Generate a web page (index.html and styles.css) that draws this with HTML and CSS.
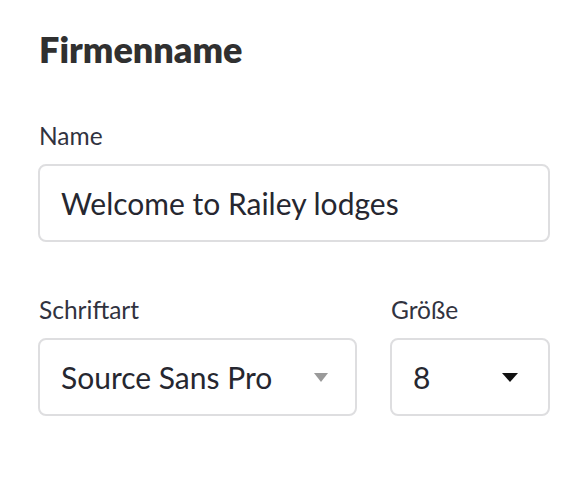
FILE: index.html
```html
<!DOCTYPE html>
<html lang="de">
<head>
<meta charset="utf-8">
<title>Firmenname</title>
<link rel="stylesheet" href="styles.css">
</head>
<body>
<div class="panel">
  <h2 class="title">Firmenname</h2>
  <div class="field">
    <label class="label">Name</label>
    <div class="box">
      <span class="value">Welcome to Railey lodges</span>
    </div>
  </div>
  <div class="row">
    <div class="field">
      <label class="label">Schriftart</label>
      <div class="box select">
        <span class="value">Source Sans Pro</span>
        <svg class="arrow gray" width="14" height="10" viewBox="0 0 14 10"><polygon points="0,0 14,0 7,9" fill="#9a9a9a"/></svg>
      </div>
    </div>
    <div class="field">
      <label class="label">Größe</label>
      <div class="box select">
        <span class="value">8</span>
        <svg class="arrow dark" width="16" height="10" viewBox="0 0 16 10"><polygon points="0,0 16,0 8,9" fill="#111"/></svg>
      </div>
    </div>
  </div>
</div>
</body>
</html>
```

FILE: styles.css
```css
html, body {
  margin: 0;
  padding: 0;
  background: #ffffff;
}

body {
  font-family: Lato, "Noto Sans", sans-serif;
  color: #31333f;
}

.panel {
  width: 512px;
  padding: 28px 0 0 38px;
  display: flex;
  flex-direction: column;
}

.title {
  margin: 0 0 52px 1px;
  font-size: 36px;
  line-height: 42px;
  font-weight: 800;
  color: #303030;
}

.field {
  display: flex;
  flex-direction: column;
}

.label {
  font-size: 24.5px;
  line-height: 28px;
  margin: 0 0 14px 1px;
  color: #31333f;
}

.box {
  box-sizing: border-box;
  height: 78px;
  border: 2px solid #dedee0;
  border-radius: 8px;
  display: flex;
  align-items: center;
  padding: 0 0 0 21px;
  background: #fff;
}

.value {
  font-size: 30px;
  line-height: 36px;
  color: #262730;
}

.row {
  margin-top: 54px;
  display: grid;
  grid-template-columns: 319px 160px;
  column-gap: 33px;
}

.select {
  justify-content: space-between;
}

.arrow.gray {
  margin-right: 27px;
  margin-top: 2px;
}

.arrow.dark {
  margin-right: 30px;
  margin-top: 2px;
}
```
